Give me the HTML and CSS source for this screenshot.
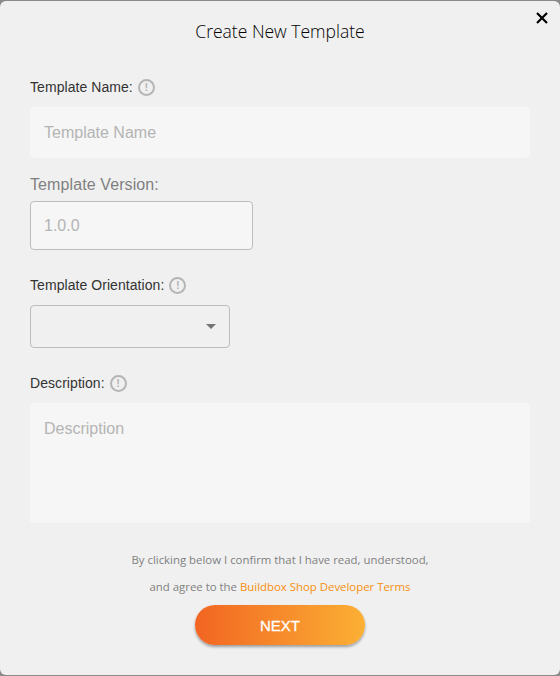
FILE: index.html
```html
<!DOCTYPE html>
<html lang="en">
<head>
    <meta charset="UTF-8">
    <meta name="viewport" content="width=device-width, initial-scale=1.0">
    <title>Create New Template</title>
    <link rel="stylesheet" href="styles.css">
</head>
<body>
    <div class="modal">
        <button class="close-btn" aria-label="Close">
            <svg width="14" height="14" viewBox="0 0 14 14"><path d="M2 2L12 12M12 2L2 12" stroke="#000" stroke-width="2.2" fill="none"/></svg>
        </button>
        <h1 class="title">Create New Template</h1>

        <div class="field-label label-name">Template Name: <span class="info">!</span></div>
        <input class="input-flat input-name" type="text" placeholder="Template Name">

        <div class="field-label-big">Template Version:</div>
        <input class="input-version" type="text" placeholder="1.0.0">

        <div class="field-label label-orientation">Template Orientation: <span class="info">!</span></div>
        <div class="select-box"><span class="caret"></span></div>

        <div class="field-label label-desc">Description: <span class="info">!</span></div>
        <textarea class="input-flat input-desc" placeholder="Description"></textarea>

        <p class="terms">By clicking below I confirm that I have read, understood,</p>
        <p class="terms terms-second">and agree to the <a href="#">Buildbox Shop Developer Terms</a></p>

        <button class="next-btn">NEXT</button>
    </div>
</body>
</html>
```

FILE: styles.css
```css
html, body {
    margin: 0;
    height: 100%;
}
body {
    background-color: #8a8a8a;
    font-family: "Liberation Sans", Arial, sans-serif;
    overflow: hidden;
}
.modal {
    position: relative;
    box-sizing: border-box;
    height: 674px;
    margin-top: 1px;
    padding: 0 30px;
    background-color: #f0f0f0;
    border-radius: 6px;
}
.close-btn {
    position: absolute;
    top: 10px;
    right: 11px;
    padding: 0;
    width: 14px;
    height: 14px;
    border: none;
    background: none;
    line-height: 0;
}
.title {
    margin: 0;
    padding-top: 18px;
    font-family: "Open Sans", sans-serif;
    font-size: 17.5px;
    font-weight: 300;
    line-height: 24px;
    color: #000;
    text-align: center;
}
.field-label {
    display: flex;
    align-items: center;
    gap: 5px;
    height: 20px;
    font-size: 14px;
    letter-spacing: 0.06px;
    color: #333;
}
.label-name {
    margin-top: 34px;
}
.label-orientation {
    margin-top: 25px;
}
.label-desc {
    margin-top: 25px;
}
.info {
    box-sizing: border-box;
    width: 17px;
    height: 17px;
    border: 2px solid #b5b5b5;
    border-radius: 50%;
    font-size: 11px;
    font-weight: bold;
    line-height: 13px;
    text-align: center;
    color: #b5b5b5;
}
input, textarea {
    display: block;
    box-sizing: border-box;
    font-family: "Liberation Sans", Arial, sans-serif;
    font-size: 16px;
    outline: none;
    resize: none;
    color: #333;
}
input::placeholder, textarea::placeholder {
    color: #b4b4b4;
    opacity: 1;
}
.input-flat {
    width: 100%;
    padding: 0 14px;
    border: none;
    border-radius: 4px;
    background-color: #f6f6f6;
}
.input-name {
    height: 51px;
    margin-top: 10px;
}
.field-label-big {
    margin-top: 17px;
    height: 20px;
    line-height: 20px;
    font-size: 16px;
    letter-spacing: 0.1px;
    color: #808080;
}
.input-version {
    width: 223px;
    height: 49px;
    margin-top: 6px;
    padding: 0 13px;
    border: 1px solid #bdbdbd;
    border-radius: 4px;
    background-color: #f6f6f6;
}
.select-box {
    display: flex;
    align-items: center;
    justify-content: flex-end;
    box-sizing: border-box;
    width: 200px;
    height: 43px;
    margin-top: 10px;
    padding-right: 13px;
    border: 1px solid #bdbdbd;
    border-radius: 4px;
}
.caret {
    width: 0;
    height: 0;
    border-left: 5px solid transparent;
    border-right: 5px solid transparent;
    border-top: 5px solid #757575;
}
.input-desc {
    height: 120px;
    margin-top: 10px;
    padding-top: 17px;
}
.terms {
    margin: 28px 0 0;
    font-family: "Open Sans", sans-serif;
    font-size: 11.4px;
    line-height: 17px;
    text-align: center;
    color: #808080;
}
.terms-second {
    margin-top: 10px;
}
.terms a {
    color: #f78f0e;
    text-decoration: none;
}
.next-btn {
    display: block;
    width: 170px;
    height: 40px;
    margin: 10px auto 0;
    border: none;
    border-radius: 20px;
    background: linear-gradient(to right, #f26522, #fbb034);
    box-shadow: 0 2px 3px rgba(0, 0, 0, 0.35);
    font-family: "Liberation Sans", Arial, sans-serif;
    font-size: 15px;
    -webkit-text-stroke: 0.3px #fff;
    color: #fff;
}
```
